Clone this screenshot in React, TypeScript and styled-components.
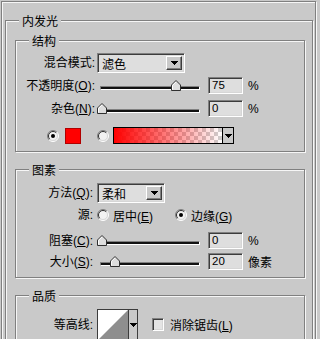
import React from "react";
import styled, { createGlobalStyle } from "styled-components";

const BG = "#c9c9c9";
const DARK = "#808080";
const LIGHT = "#f6f6f6";

const Global = createGlobalStyle`
  html, body { margin: 0; padding: 0; overflow: hidden; background: ${BG}; }
  body {
    font-family: "Liberation Sans", "Noto Sans CJK SC", sans-serif;
    font-size: 12px;
    color: #000;
  }
  * { box-sizing: border-box; }
`;

const Page = styled.div`
  width: 320px;
  height: 339px;
  overflow: hidden;
  padding: 1px 4px 0 1px;
`;

const OuterFrame = styled.div`
  border: 1px solid ${DARK};
  box-shadow: inset 1px 1px 0 ${LIGHT}, 1px 1px 0 ${LIGHT};
  padding: 12px 2px 0 3px;
  height: 360px;
`;

const Group = styled.fieldset<{ $mt?: number }>`
  margin: ${(p) => p.$mt ?? 0}px 0 0 0;
  padding: 0;
  min-inline-size: 0;
  border: 1px solid ${DARK};
  box-shadow: inset 1px 1px 0 ${LIGHT}, 1px 1px 0 ${LIGHT};
`;

const Legend = styled.legend`
  margin-left: 13px;
  padding: 0 3px;
  height: 13px;
  line-height: 13px;
  background: ${BG};
  font-family: "Noto Sans CJK SC", sans-serif;
`;

const GroupBody = styled.div<{ $pad: string }>`
  padding: ${(p) => p.$pad};
  display: flex;
  flex-direction: column;
`;

const Row = styled.div<{ $h: number; $mt?: number; $pl?: number }>`
  display: flex;
  align-items: center;
  height: ${(p) => p.$h}px;
  margin-top: ${(p) => p.$mt ?? 0}px;
  padding-left: ${(p) => p.$pl ?? 0}px;
  white-space: nowrap;
`;

const Label = styled.div<{ $pr?: number }>`
  width: 81px;
  flex: none;
  text-align: right;
  padding-right: ${(p) => p.$pr ?? 2}px;
  line-height: 14px;
`;

const Key = styled.span`
  text-decoration: underline;
  text-underline-offset: 1px;
`;

const Sunken = styled.div`
  border-top: 1px solid ${DARK};
  border-left: 1px solid ${DARK};
  border-right: 1px solid #fff;
  border-bottom: 1px solid #fff;
  box-shadow: inset 1px 1px 0 #3c3c3c, inset -1px -1px 0 #d6d6d6;
`;

const SelectBox = styled(Sunken)<{ $w: number }>`
  width: ${(p) => p.$w}px;
  height: 20px;
  flex: none;
  display: flex;
  padding: 2px;
  background: #dedede;
`;

const SelectText = styled.div`
  flex: 1;
  padding-left: 2px;
  line-height: 16px;
  font-family: "Noto Sans CJK SC", sans-serif;
`;

const DropButton = styled.div<{ $w: number }>`
  width: ${(p) => p.$w}px;
  flex: none;
  background: ${BG};
  border-top: 1px solid #fff;
  border-left: 1px solid #fff;
  border-right: 1px solid #3c3c3c;
  border-bottom: 1px solid #3c3c3c;
  box-shadow: inset -1px -1px 0 ${DARK};
  display: flex;
  align-items: center;
  justify-content: center;
`;

const Arrow = () => (
  <svg width="7" height="4" viewBox="0 0 7 4" shapeRendering="crispEdges">
    <polygon points="0,0 7,0 3.5,4" fill="#000" />
  </svg>
);

const SliderBox = styled.div`
  position: relative;
  width: 103px;
  height: 17px;
  flex: none;
  padding: 9px 0 0 3px;
`;

const Track = styled.div`
  height: 4px;
  border-top: 1px solid ${DARK};
  border-left: 1px solid ${DARK};
  border-right: 1px solid #fff;
  border-bottom: 1px solid #fff;
  background: #111;
`;

const ThumbWrap = styled.div`
  position: absolute;
  top: 3px;
  width: 10px;
  height: 11px;
`;

const Thumb = () => (
  <svg width="10" height="11" viewBox="0 0 10 11">
    <path d="M0.5 10.5 V5 L5 0.5 L9.5 5 V10.5 Z" fill="#dedede" stroke="#303030" strokeWidth="1" />
    <path d="M1.5 9.5 V5.4 L5 1.9" fill="none" stroke="#fff" strokeWidth="1" />
  </svg>
);

const Slider = ({ v }: { v: number }) => (
  <SliderBox>
    <Track />
    <ThumbWrap style={{ left: `${Math.round(v * 99)}px` }}>
      <Thumb />
    </ThumbWrap>
  </SliderBox>
);

const NumField = styled(Sunken)`
  width: 35px;
  height: 17px;
  flex: none;
  margin-left: 8px;
  padding-left: 3px;
  line-height: 15px;
  font-size: 11.5px;
  background: #dedede;
`;

const Unit = styled.span`
  margin-left: 5px;
  font-family: "Liberation Sans", "Noto Sans CJK SC", sans-serif;
`;

const RadioWrap = styled.span<{ $ml?: number }>`
  display: inline-flex;
  flex: none;
  margin-left: ${(p) => p.$ml ?? 0}px;
  width: 12px;
  height: 12px;
`;

const Radio = ({ on, ml }: { on?: boolean; ml?: number }) => (
  <RadioWrap $ml={ml}>
    <svg width="12" height="12" viewBox="0 0 12 12">
      <circle cx="6" cy="6" r="5" fill="#f2f2f2" />
      <path d="M2.1 9.9 A5.5 5.5 0 0 1 9.9 2.1" fill="none" stroke={DARK} strokeWidth="1" />
      <path d="M9.9 2.1 A5.5 5.5 0 0 1 2.1 9.9" fill="none" stroke="#fff" strokeWidth="1" />
      <path d="M2.8 9.2 A4.5 4.5 0 0 1 9.2 2.8" fill="none" stroke="#303030" strokeWidth="1" />
      <path d="M9.2 2.8 A4.5 4.5 0 0 1 2.8 9.2" fill="none" stroke="#d8d8d8" strokeWidth="1" />
      {on && <circle cx="6" cy="6" r="2" fill="#000" />}
    </svg>
  </RadioWrap>
);

const OptionText = styled.span<{ $w?: number }>`
  margin-left: 4px;
  width: ${(p) => (p.$w ? `${p.$w}px` : "auto")};
  flex: none;
`;

const Swatch = styled.div`
  width: 16px;
  height: 16px;
  margin-left: 6px;
  flex: none;
  background: #ff0000;
  border: 1px solid #b00000;
`;

const GradientPicker = styled.div`
  margin-left: 4px;
  width: 121px;
  height: 17px;
  flex: none;
  display: flex;
  border: 1px solid #000;
`;

const GradientFill = styled.div`
  flex: 1;
  background-image: linear-gradient(to right, rgba(255, 0, 0, 1), rgba(255, 0, 0, 0)),
    conic-gradient(#ffffff 25%, #cfcfcf 0 50%, #ffffff 0 75%, #cfcfcf 0);
  background-size: 100% 100%, 8px 8px;
`;

const GradientButton = styled.div`
  width: 11px;
  flex: none;
  border-left: 1px solid #000;
  background: ${BG};
  display: flex;
  align-items: center;
  justify-content: center;
`;

const ContourBox = styled.div`
  width: 31px;
  height: 31px;
  flex: none;
  border-top: 1px solid #3c3c3c;
  border-left: 1px solid #3c3c3c;
  background: #fff;
  display: flex;
`;

const ContourButton = styled.div`
  width: 10px;
  height: 31px;
  flex: none;
  border: 1px solid #3c3c3c;
  background: ${BG};
  display: flex;
  align-items: center;
  justify-content: center;
`;

const CheckBox = styled(Sunken)`
  width: 12px;
  height: 13px;
  flex: none;
  margin-left: 14px;
  background: #e4e4e4;
`;

const CheckText = styled.span`
  margin-left: 6px;
`;

export default function App() {
  return (
    <>
      <Global />
      <Page>
        <OuterFrame>
          <Group>
            <Legend>内发光</Legend>
            <GroupBody $pad="7px 7px 12px 9px">
              <Group>
                <Legend>结构</Legend>
                <GroupBody $pad="6px 0 7px 0">
                  <Row $h={20}>
                    <Label>混合模式:</Label>
                    <SelectBox $w={88}>
                      <SelectText>滤色</SelectText>
                      <DropButton $w={16}>
                        <Arrow />
                      </DropButton>
                    </SelectBox>
                  </Row>
                  <Row $h={17} $mt={4}>
                    <Label>
                      不透明度(<Key>O</Key>):
                    </Label>
                    <Slider v={0.75} />
                    <NumField>75</NumField>
                    <Unit>%</Unit>
                  </Row>
                  <Row $h={17} $mt={6}>
                    <Label>
                      杂色(<Key>N</Key>):
                    </Label>
                    <Slider v={0} />
                    <NumField>0</NumField>
                    <Unit>%</Unit>
                  </Row>
                  <Row $h={17} $mt={10} $pl={31}>
                    <Radio on />
                    <Swatch />
                    <Radio ml={16} />
                    <GradientPicker>
                      <GradientFill />
                      <GradientButton>
                        <Arrow />
                      </GradientButton>
                    </GradientPicker>
                  </Row>
                </GroupBody>
              </Group>

              <Group $mt={11}>
                <Legend>图素</Legend>
                <GroupBody $pad="7px 0 7px 0">
                  <Row $h={20}>
                    <Label $pr={4}>
                      方法(<Key>Q</Key>):
                    </Label>
                    <SelectBox $w={68}>
                      <SelectText>柔和</SelectText>
                      <DropButton $w={16}>
                        <Arrow />
                      </DropButton>
                    </SelectBox>
                  </Row>
                  <Row $h={16} $mt={4}>
                    <Label $pr={4}>源:</Label>
                    <Radio />
                    <OptionText $w={62}>
                      居中(<Key>E</Key>)
                    </OptionText>
                    <Radio on />
                    <OptionText>
                      边缘(<Key>G</Key>)
                    </OptionText>
                  </Row>
                  <Row $h={17} $mt={9}>
                    <Label $pr={4}>
                      阻塞(<Key>C</Key>):
                    </Label>
                    <Slider v={0} />
                    <NumField>0</NumField>
                    <Unit>%</Unit>
                  </Row>
                  <Row $h={17} $mt={4}>
                    <Label $pr={4}>
                      大小(<Key>S</Key>):
                    </Label>
                    <Slider v={0.133} />
                    <NumField>20</NumField>
                    <Unit>像素</Unit>
                  </Row>
                </GroupBody>
              </Group>

              <Group $mt={11}>
                <Legend>品质</Legend>
                <GroupBody $pad="7px 0 7px 0">
                  <Row $h={31}>
                    <Label $pr={4}>等高线:</Label>
                    <ContourBox>
                      <svg width="30" height="30" viewBox="0 0 30 30">
                        <polygon points="0,30 30,0 30,30" fill="#8e8e8e" />
                      </svg>
                    </ContourBox>
                    <ContourButton>
                      <Arrow />
                    </ContourButton>
                    <CheckBox />
                    <CheckText>
                      消除锯齿(<Key>L</Key>)
                    </CheckText>
                  </Row>
                </GroupBody>
              </Group>
            </GroupBody>
          </Group>
        </OuterFrame>
      </Page>
    </>
  );
}
